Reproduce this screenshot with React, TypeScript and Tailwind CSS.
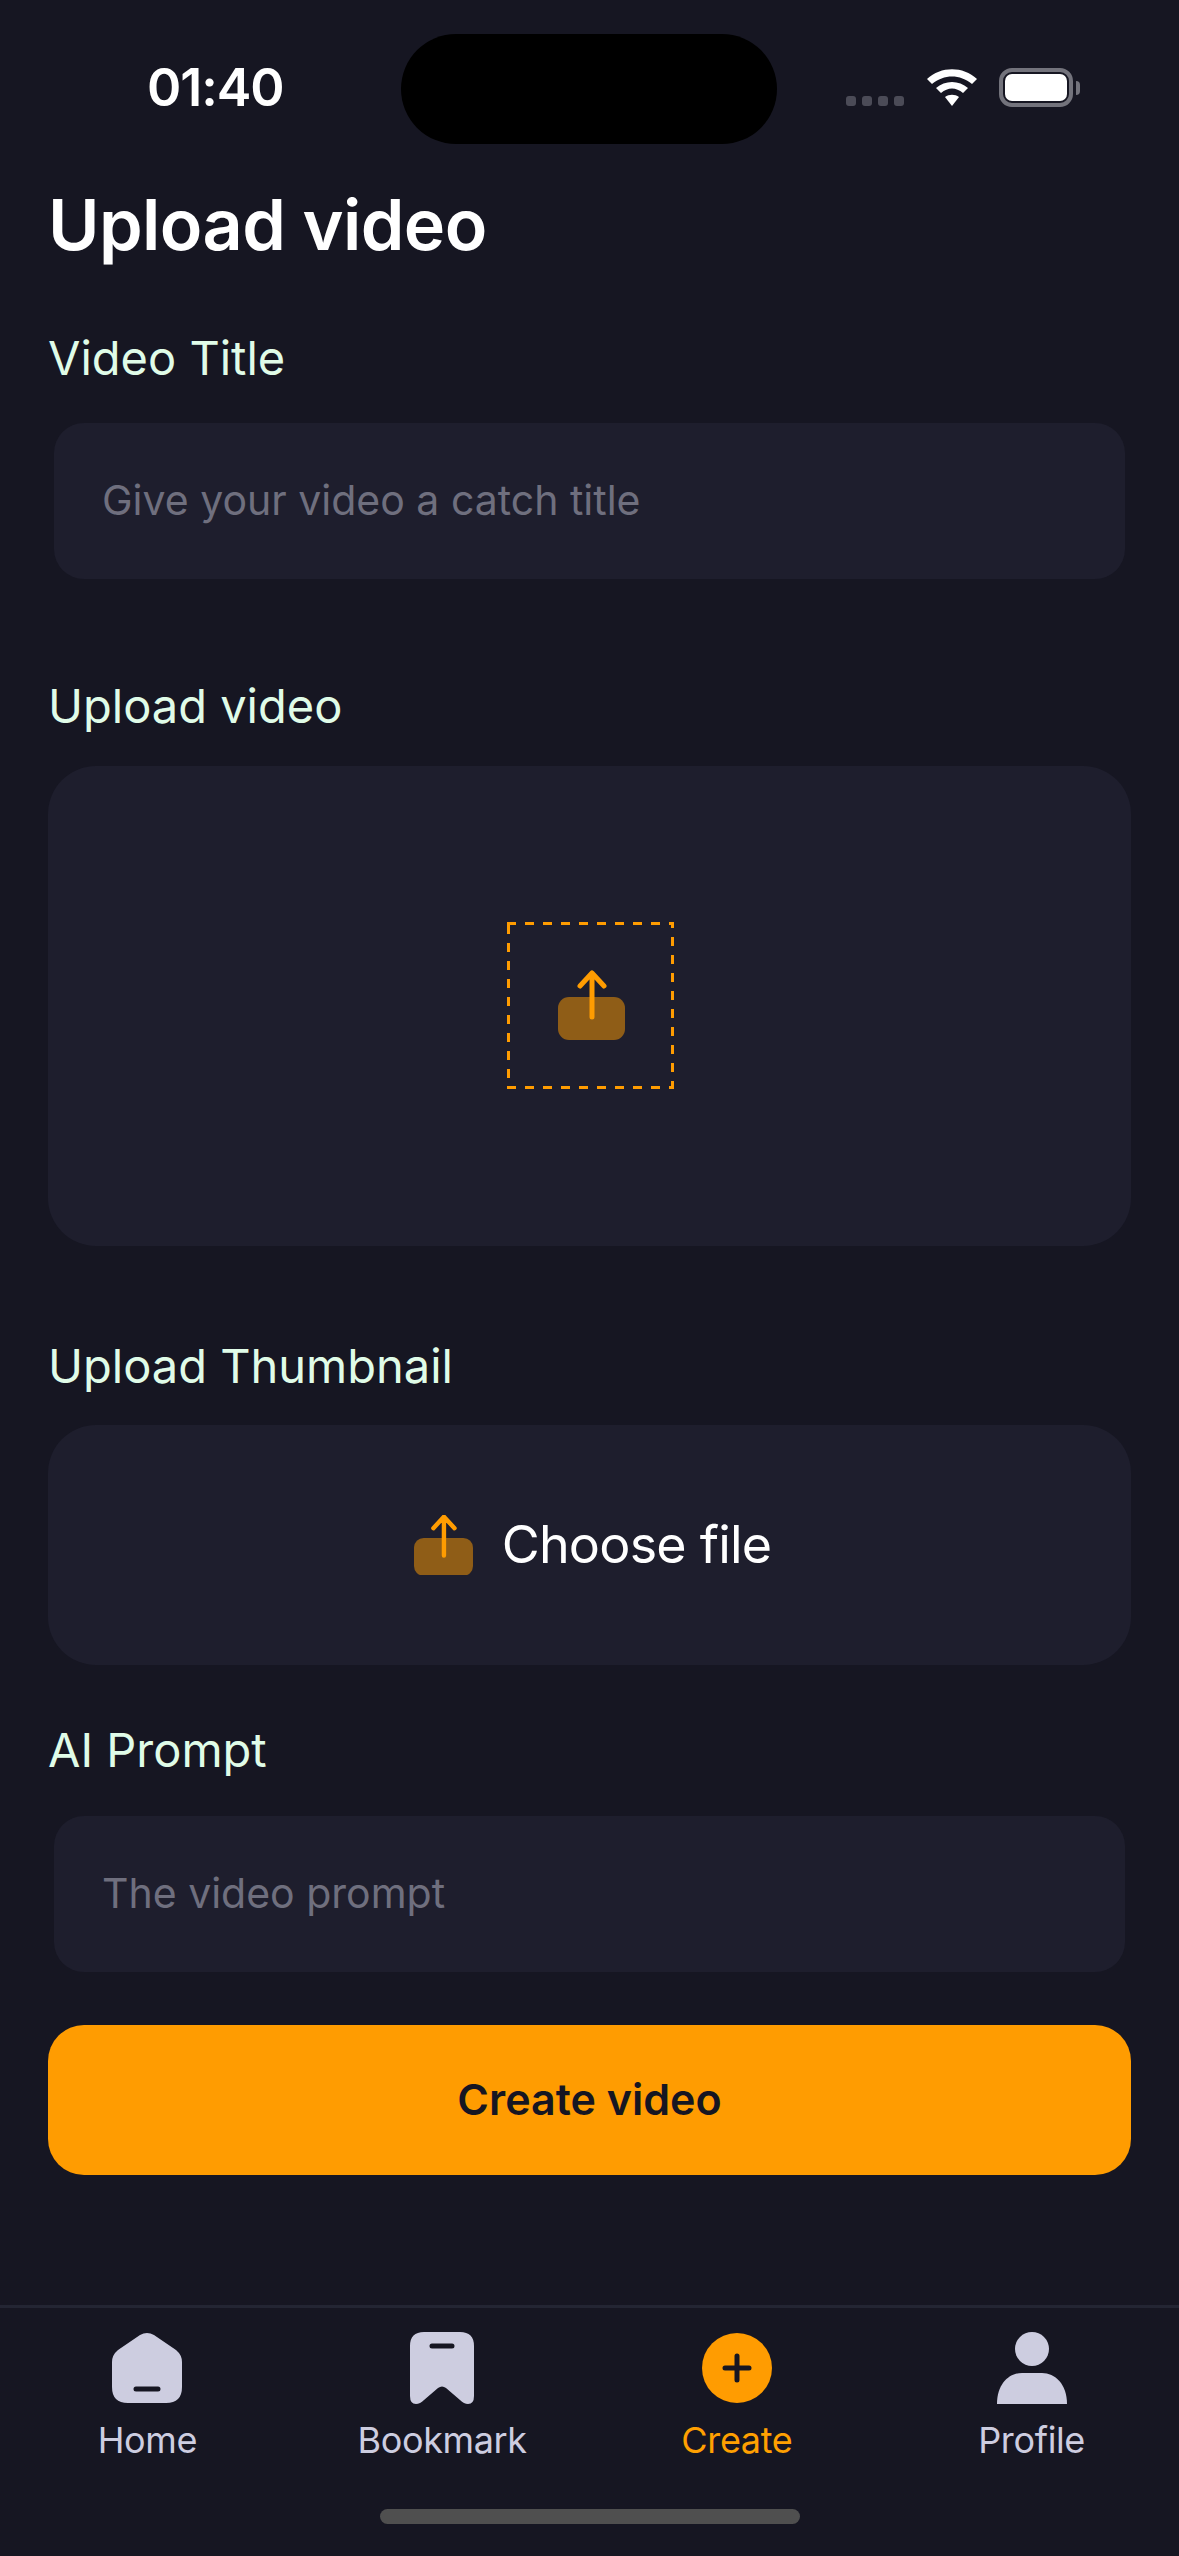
const font = "font-['Inter',sans-serif]";

const Label = ({ children, className = "" }: { children: string; className?: string }) => (
    <div className={`h-[60px] pt-[2px] text-[47px] leading-[60px] font-normal text-[#E0FCE8] ${className}`}>{children}</div>
);

const Field = ({ placeholder }: { placeholder: string }) => (
    <div className="mt-[37px] mx-[6px] h-[156px] rounded-[30px] bg-[#1E1E2D] flex items-center px-[48px]">
        <span className="text-[41px] text-[#6F6F7E]">{placeholder}</span>
    </div>
);

const UploadIcon = ({ width }: { width: number }) => (
    <svg width={width} height={width * (69 / 67)} viewBox="0 0 67 69" fill="none">
        <rect x="0" y="26" width="67" height="43" rx="11" fill="#FF9C01" fillOpacity="0.5" />
        <path d="M34 46V2M22 15L34 2L46 15" stroke="#FF9C01" strokeWidth="5" strokeLinecap="round" strokeLinejoin="round" />
    </svg>
);

// dashed frame around the upload icon, css dashes come out too short
const DashedFrame = () => (
    <svg width="167" height="167" viewBox="0 0 167 167" fill="none">
        <g stroke="#FF9C01" strokeWidth="3" strokeDasharray="9 9">
            <path d="M0 1.500H167" />
            <path d="M0 165.500H167" />
            <path d="M1.500 0V167" strokeDashoffset="-3" />
            <path d="M165.500 0V167" strokeDashoffset="3" />
        </g>
        <rect x="51" y="75" width="67" height="43" rx="11" fill="#FF9C01" fillOpacity="0.5" />
        <path d="M85 95V51M73 64L85 51L97 64" stroke="#FF9C01" strokeWidth="5" strokeLinecap="round" strokeLinejoin="round" />
    </svg>
);

const HomeIcon = () => (
    <svg width="70" height="70" viewBox="0 0 70 70">
        <path
            fillRule="evenodd"
            fill="#CDCDE0"
            d="M28 2Q35 -2 42 2L64 17Q70 22 70 29V54Q70 70 54 70H16Q0 70 0 54V29Q0 22 6 17ZM24 53.500A2.500 2.500 0 0 0 24 58.500H46A2.500 2.500 0 0 0 46 53.500Z"
        />
    </svg>
);

const BookmarkIcon = () => (
    <svg width="64" height="72" viewBox="0 0 64 72">
        <path
            fillRule="evenodd"
            fill="#CDCDE0"
            d="M14 0H50Q64 0 64 14V64Q64 72 58 72Q54 72 50 68L36 56Q32 53 28 56L14 68Q10 72 6 72Q0 72 0 64V14Q0 0 14 0ZM22 11.500A2.500 2.500 0 0 0 22 16.500H42A2.500 2.500 0 0 0 42 11.500Z"
        />
    </svg>
);

const CreateIcon = () => (
    <svg width="70" height="70" viewBox="0 0 70 70" fill="none">
        <circle cx="35" cy="35" r="35" fill="#FF9C01" />
        <path d="M23 35H47M35 23V47" stroke="#161622" strokeWidth="5" strokeLinecap="round" />
    </svg>
);

const ProfileIcon = () => (
    <svg width="70" height="72" viewBox="0 0 70 72">
        <circle cx="35" cy="17" r="17" fill="#CDCDE0" />
        <path d="M0 72C0 52 12 41 25 41H45C58 41 70 52 70 72Z" fill="#CDCDE0" />
    </svg>
);

const tabs = [
    { name: "Home", icon: <HomeIcon />, active: false },
    { name: "Bookmark", icon: <BookmarkIcon />, active: false },
    { name: "Create", icon: <CreateIcon />, active: true },
    { name: "Profile", icon: <ProfileIcon />, active: false },
];

const StatusBar = () => (
    <div className="h-[180px] flex items-start">
        <div className="ml-[147px] w-[254px] mt-[55px] text-[52px] leading-[66px] font-semibold tracking-[-0.02em] text-white">01:40</div>
        <div className="mt-[34px] w-[376px] h-[110px] rounded-[55px] bg-black" />
        <div className="ml-[69px] mt-[68px] flex items-end">
            <div className="flex gap-[6px] mb-[1px]">
                {[0, 1, 2, 3].map((dot) => (
                    <div key={dot} className="w-[10px] h-[10px] rounded-[3px] bg-[#4B4B57]" />
                ))}
            </div>
            <svg className="ml-[23px] mb-[1px]" width="50" height="37" viewBox="0 0 50 37" fill="#FFFFFF">
                <path d="M0 10C14 -3 36 -3 50 10L45 15C33 5 17 5 5 15Z" />
                <path d="M9 19C18 11 32 11 41 19L36 24C29 18 21 18 14 24Z" />
                <path d="M18 28C22 25 28 25 32 28L25 37Z" />
            </svg>
            <div className="ml-[22px] flex items-center">
                <div className="w-[74px] h-[39px] rounded-[13px] border-[4px] border-[#73737C] p-[2px]">
                    <div className="w-full h-full rounded-[7px] bg-white" />
                </div>
                <div className="ml-[3px] w-[4px] h-[14px] rounded-r-full bg-[#73737C]" />
            </div>
        </div>
    </div>
);

export default function App() {
    return (
        <div className={`${font} w-[1179px] h-[2556px] bg-[#161622] flex flex-col overflow-hidden`}>
            <StatusBar />
            <main className="flex-1 px-[48px]">
                <h1 className="h-[90px] text-[70px] leading-[90px] font-semibold tracking-[-0.008em] text-white">Upload video</h1>

                <Label className="mt-[56px]">Video Title</Label>
                <Field placeholder="Give your video a catch title" />

                <Label className="mt-[95px]">Upload video</Label>
                <div className="mt-[32px] h-[480px] rounded-[48px] bg-[#1E1E2D] flex items-center justify-center">
                    <div className="mt-[-1px] ml-[2px]">
                        <DashedFrame />
                    </div>
                </div>

                <Label className="mt-[88px]">Upload Thumbnail</Label>
                <div className="mt-[31px] h-[240px] pl-[6px] rounded-[48px] bg-[#1E1E2D] flex items-center justify-center gap-[29px]">
                    <UploadIcon width={59} />
                    <span className="text-[52px] tracking-[-0.015em] text-white">Choose file</span>
                </div>

                <Label className="mt-[53px] !h-[61px]">AI Prompt</Label>
                <Field placeholder="The video prompt" />

                <button className="mt-[53px] w-full h-[150px] pb-[2px] rounded-[36px] bg-[#FF9C01] text-[43px] font-semibold text-[#161622]">
                    Create video
                </button>
            </main>

            <nav className="h-[251px] border-t-[3px] border-[#232533] flex flex-col">
                <div className="grid grid-cols-4 pt-[24px]">
                    {tabs.map((tab) => (
                        <div key={tab.name} className="flex flex-col items-center">
                            <div className="h-[72px] flex items-center justify-center">{tab.icon}</div>
                            <span className={`mt-[14px] text-[36px] leading-[44px] tracking-[-0.01em] ${tab.active ? "text-[#FFA001]" : "text-[#CDCDE0]"}`}>
                                {tab.name}
                            </span>
                        </div>
                    ))}
                </div>
                <div className="mt-[47px] mx-auto w-[420px] h-[15px] rounded-full bg-[#4F4F4F]" />
            </nav>
        </div>
    );
}
